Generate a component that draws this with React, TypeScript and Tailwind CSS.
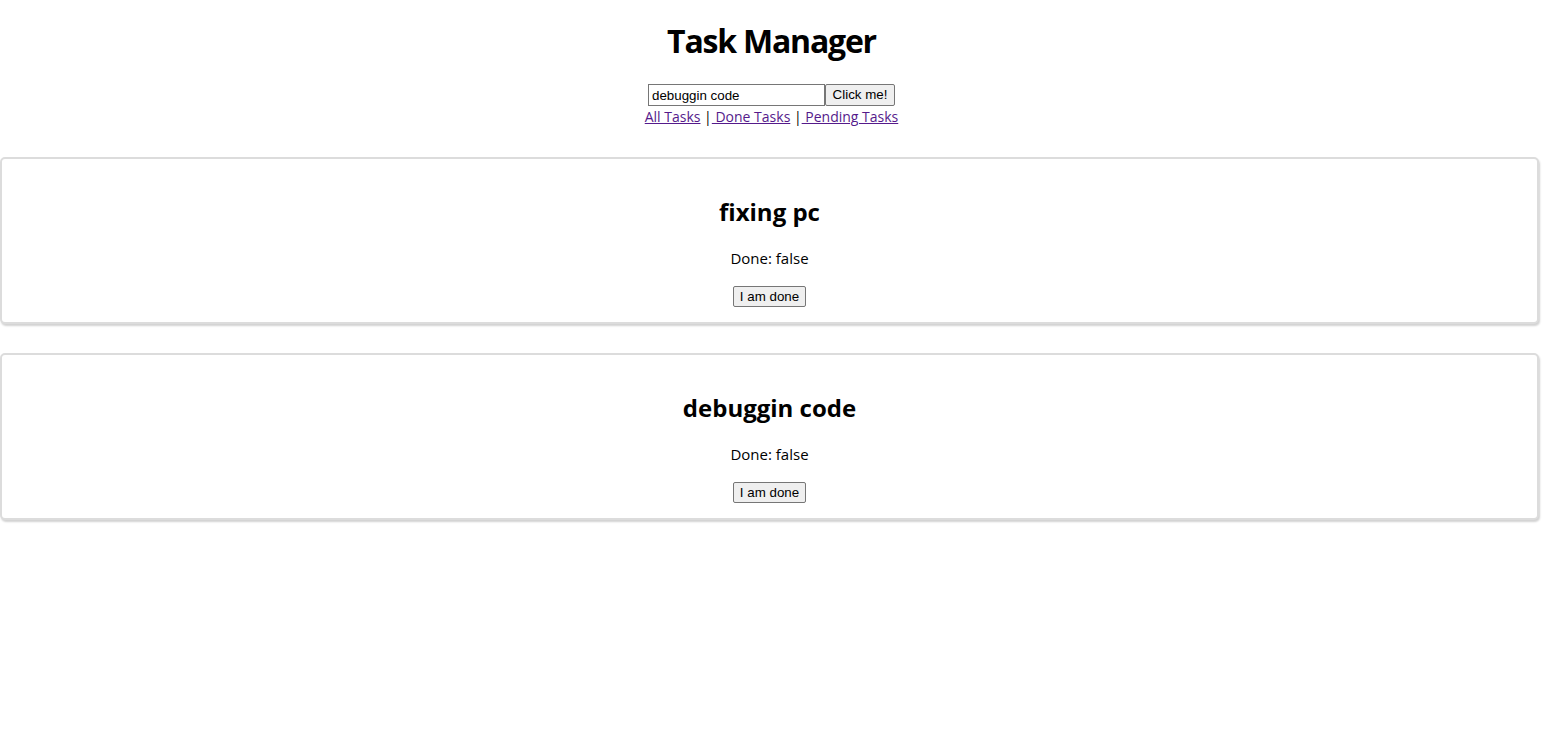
import { useState } from "react";

type Task = { title: string; done: boolean };

const initialTasks: Task[] = [
  { title: "fixing pc", done: false },
  { title: "debuggin code", done: false },
];

function TaskCard({ task, onDone }: { task: Task; onDone: () => void }) {
  return (
    <div className="mr-[4px] mt-[29px] rounded-[5px] border-2 border-[#dcdcdc] bg-white px-4 pt-[17px] pb-[15px] text-center shadow-[1px_2px_2px_rgba(0,0,0,0.18)]">
      <h2 className="mt-[20px] mb-[20px] text-[24px] leading-[32px] font-bold">
        {task.title}
      </h2>
      <p className="text-[15px] leading-[21px]">Done: {String(task.done)}</p>
      <button
        onClick={onDone}
        className="mt-[17px] h-[21px] rounded-[2px] border border-[#767676] bg-[#efefef] px-[6px] font-['Liberation_Sans',Arial,sans-serif] text-[13.33px] leading-[15px] text-black"
      >
        I am done
      </button>
    </div>
  );
}

export default function App() {
  const [tasks, setTasks] = useState(initialTasks);
  const [text, setText] = useState("debuggin code");

  return (
    <div className="min-h-screen bg-white font-['Open_Sans','Noto_Sans',sans-serif] text-black">
      <h1 className="pt-[19px] pb-[22px] text-center text-[32px] leading-[43px] font-bold tracking-[-1.2px]">
        Task Manager
      </h1>
      <div className="flex justify-center">
        <input
          value={text}
          onChange={(e) => setText(e.target.value)}
          className="h-[22px] w-[177px] border border-[#767676] px-[3px] font-['Liberation_Sans',Arial,sans-serif] text-[13.33px] outline-none"
        />
        <button
          onClick={() => setTasks([...tasks, { title: text, done: false }])}
          className="h-[22px] w-[70px] rounded-[2px] border border-[#767676] bg-[#efefef] font-['Liberation_Sans',Arial,sans-serif] text-[13.33px]"
        >
          Click me!
        </button>
      </div>
      <div className="text-center text-[14px] leading-[22px]">
        <a href="#" className="text-[#551a8b] underline">All Tasks</a> |
        <a href="#" className="text-[#551a8b] underline"> Done Tasks</a> |
        <a href="#" className="text-[#551a8b] underline"> Pending Tasks</a>
      </div>
      {tasks.map((t, i) => (
        <TaskCard
          key={i}
          task={t}
          onDone={() =>
            setTasks(tasks.map((x, j) => (j === i ? { ...x, done: true } : x)))
          }
        />
      ))}
    </div>
  );
}
